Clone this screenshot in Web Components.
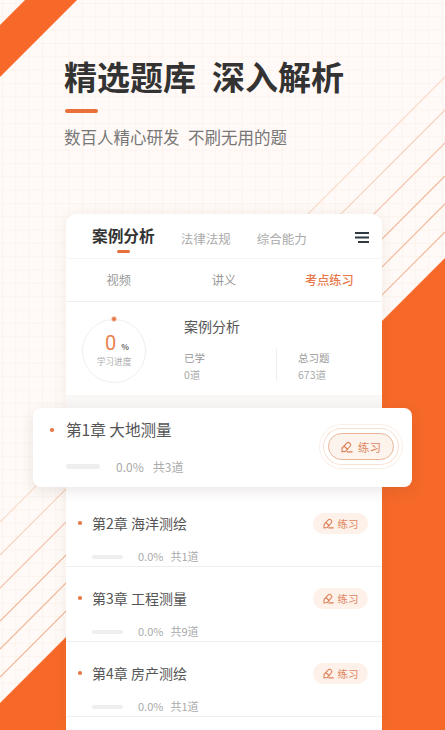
<!DOCTYPE html>
<html lang="zh-CN">
<head>
<meta charset="utf-8">
<title>精选题库</title>
<style>
html,body{margin:0;padding:0;background:#fffaf7}
body{font-family:"Noto Sans CJK SC","Noto Sans",sans-serif}
</style>
</head>
<body>
<template id="t-screen">
<style>
:host{display:block;position:relative;width:445px;height:730px;overflow:hidden;background-color:#fffaf7;
background-image:linear-gradient(#fdf3ee 1px,transparent 1px),linear-gradient(90deg,#fdf3ee 1px,transparent 1px);
background-size:13.33px 13.33px;background-position:2px 3px;font-family:"Noto Sans CJK SC","Noto Sans",sans-serif}
svg{position:absolute;left:0;top:0}
.content{position:relative;display:flex;flex-direction:column;height:100%}
::slotted([slot=float]){position:absolute;left:33px;top:408px}
</style>
<svg width="445" height="730" viewBox="0 0 445 730" aria-hidden="true">
  <polygon points="25,0 77,0 0,77 0,25" fill="#f66928"/>
  <polygon points="445,258 445,730 0,730 0,703" fill="#f66928"/>
  <g fill="none" stroke="#eeb596" stroke-width="1.1">
    <line x1="445" y1="77" x2="0" y2="522" stroke-opacity=".45"/>
    <line x1="445" y1="110" x2="0" y2="555" stroke-opacity=".6"/>
    <line x1="445" y1="143" x2="0" y2="588" stroke-opacity=".8"/>
    <line x1="445" y1="176" x2="0" y2="621"/>
    <line x1="445" y1="204" x2="0" y2="649"/>
    <line x1="445" y1="232" x2="0" y2="677"/>
  </g>
</svg>
<div class="content"><slot></slot></div>
<slot name="float"></slot>
</template>

<template id="t-hero">
<style>
:host{display:flex;flex-direction:column;align-items:flex-start;height:214px;box-sizing:border-box;padding:53px 0 0 64px}
.t{font-size:33px;line-height:46px;font-weight:700;color:#333;white-space:pre;word-spacing:.5px}
.bar{width:33px;height:4px;border-radius:2px;background:#e8703a;margin:10px 0 0 1px}
.s{font-size:16.5px;line-height:24px;color:#777;white-space:pre;margin-top:12px;word-spacing:.5px}
</style>
<div class="t"><slot name="title"></slot></div>
<div class="bar"></div>
<div class="s"><slot name="sub"></slot></div>
</template>

<template id="t-card">
<style>
:host{display:block;width:316px;margin-left:66px;flex:1;background:#fff;border-radius:10px 10px 0 0;box-shadow:0 0 14px rgba(120,90,70,.09)}
</style>
<slot></slot>
</template>

<template id="t-subjects">
<style>
:host{display:flex;align-items:flex-start;height:45px;box-sizing:border-box;padding-left:26px;border-bottom:1px solid #f6f4f2;position:relative}
.menu{margin-left:auto;margin-right:13px;margin-top:18px;width:14px;height:11px}
</style>
<slot></slot>
<svg class="menu" viewBox="0 0 14 11" aria-hidden="true"><path d="M0 1H14M0 5.5H14M3 10H14" stroke="#2f3a42" stroke-width="1.8" fill="none"/></svg>
</template>

<template id="t-subject">
<style>
:host{display:block;position:relative;font-size:12.5px;line-height:18px;color:#aaa;margin:16px 0 0 26px}
:host([active]){font-size:15.7px;line-height:22px;font-weight:700;color:#333;margin:11px 0 0 0}
.u{display:none}
:host([active]) .u{display:block;position:absolute;left:24.5px;top:25px;width:13.5px;height:3px;border-radius:2px;background:#e8703a}
</style>
<slot></slot><span class="u"></span>
</template>

<template id="t-sections">
<style>
:host{display:grid;grid-template-columns:repeat(3,1fr);height:43px;border-bottom:1px solid #efefef;box-sizing:border-box}
</style>
<slot></slot>
</template>

<template id="t-section">
<style>
:host{display:flex;align-items:center;justify-content:center;font-size:12.2px;color:#999}
:host([active]){color:#e8784a;font-weight:500}
</style>
<slot></slot>
</template>

<template id="t-summary">
<style>
:host{display:flex;box-sizing:border-box;padding:17px 0 0 16px;border-bottom:13px solid #f8f7f6;height:106px}
.body{margin-left:38px;width:170px}
.name{font-size:14px;line-height:20px;color:#555;margin-top:-3px}
.stats{display:grid;grid-template-columns:92px 1fr;margin-top:13px}
</style>
<slot name="ring"></slot>
<div class="body">
  <div class="name"><slot name="name"></slot></div>
  <div class="stats"><slot></slot></div>
</div>
</template>

<template id="t-ring">
<style>
:host{display:flex;flex-direction:column;align-items:center;position:relative;width:64px;height:64px;box-sizing:border-box;border:1px solid #eeeeee;border-radius:50%;flex:none}
.dot{position:absolute;left:29px;top:-3px;width:4px;height:4px;border-radius:50%;background:#e8784a;box-shadow:0 0 0 1px #f8d8c8}
.v{display:flex;align-items:baseline;margin-top:10px;line-height:26px;height:26px;margin-left:6px}
.n{font-size:20px;color:#e8824f;font-family:Roboto,sans-serif}
.p{font-size:8px;font-weight:700;color:#666;margin-left:5px}
.l{font-size:8.7px;line-height:12px;color:#aaa;margin-top:0}
</style>
<span class="dot"></span>
<div class="v"><span class="n"><slot name="value"></slot></span><span class="p">%</span></div>
<div class="l"><slot name="label"></slot></div>
</template>

<template id="t-stat">
<style>
:host{display:block;font-size:10.5px;line-height:17px;color:#aaa;position:relative;height:31px}
:host([split]){padding-left:22px}
:host([split])::before{content:"";position:absolute;left:0;top:0;width:1px;height:32px;background:#eee}
.k{color:#999}
</style>
<div class="k"><slot name="k"></slot></div>
<div><slot name="v"></slot></div>
</template>

<template id="t-row">
<style>
:host{display:grid;grid-template-columns:1fr auto;grid-template-rows:22px 16px;row-gap:14px;height:75px;box-sizing:border-box;padding:20px 14px 0 12px;border-bottom:1px solid #eeeeee;background:#fff}
.head{display:flex;align-items:center;grid-column:1;grid-row:1}
.dot{width:3.5px;height:3.5px;border-radius:50%;background:#e8784a;margin-right:10.5px;flex:none}
.title{font-size:14px;color:#555;white-space:pre}
.stats{grid-column:1;grid-row:2;display:flex;align-items:center;margin-left:14px;font-size:11px;color:#aaa;white-space:pre}
.bar{width:31px;height:4.5px;border-radius:3px;background:#eeeeee;margin:2px 15px 0 0}
.pct{margin-right:7px}
.action{grid-column:2;grid-row:1;display:flex;align-items:center}
:host([featured]){width:379px;height:79px;grid-template-rows:22px 16px;row-gap:17px;padding:11px 18px 0 17px;border-bottom:0;border-radius:8px;box-shadow:0 4px 14px rgba(90,70,60,.13)}
:host([featured]) .dot{margin-right:12.5px}
:host([featured]) .title{font-size:15.6px;margin-top:-2px}
:host([featured]) .stats{margin-left:16px;font-size:12px}
:host([featured]) .bar{width:34px;height:5px;margin:0 16px 0 0}
:host([featured]) .pct{margin-right:9px}
:host([featured]) .action{grid-row:1 / span 2}
</style>
<div class="head"><span class="dot"></span><span class="title"><slot name="title"></slot></span></div>
<div class="stats"><span class="bar"></span><span class="pct"><slot name="pct"></slot></span><span><slot name="count"></slot></span></div>
<div class="action"><slot name="action"></slot></div>
</template>

<template id="t-btn">
<style>
:host{display:inline-flex;align-items:center;justify-content:center;gap:4px;width:55px;height:21px;border-radius:11px;background:#fdf1ea;color:#e08660;font-size:10.5px;box-sizing:border-box}
:host([large]){width:66px;height:27px;border-radius:14px;font-size:11.5px;background:#fdf3ed;border:1px solid #eab598;gap:5px;
box-shadow:0 0 0 4px #fff,0 0 0 5px #f9e0d2,0 0 0 8px #fff,0 0 0 9px #fcefe8}
svg{width:11px;height:11px;flex:none}
:host([large]) svg{width:12px;height:12px}
</style>
<svg viewBox="0 0 12 12" fill="none" stroke="#dd7f55" stroke-width="1.15" stroke-linejoin="round" stroke-linecap="round" aria-hidden="true">
<path d="M1 10.8 L1.2 7 L6 1.8 Q7 1 8 1.6 L9.4 3 Q10 4 9.2 5 L4.6 10.4 Z"/>
<path d="M3.2 5.2 L6.6 8.2"/>
<path d="M6.4 10.8 H11.2"/>
</svg>
<slot></slot>
</template>

<app-screen>
  <promo-hero>
    <span slot="title">精选题库  深入解析</span>
    <span slot="sub">数百人精心研发  不刷无用的题</span>
  </promo-hero>
  <course-card>
    <subject-tabs>
      <subject-tab active>案例分析</subject-tab>
      <subject-tab>法律法规</subject-tab>
      <subject-tab>综合能力</subject-tab>
    </subject-tabs>
    <section-tabs>
      <section-tab>视频</section-tab>
      <section-tab>讲义</section-tab>
      <section-tab active>考点练习</section-tab>
    </section-tabs>
    <progress-summary>
      <progress-ring slot="ring"><span slot="value">0</span><span slot="label">学习进度</span></progress-ring>
      <span slot="name">案例分析</span>
      <summary-stat><span slot="k">已学</span><span slot="v">0道</span></summary-stat>
      <summary-stat split><span slot="k">总习题</span><span slot="v">673道</span></summary-stat>
    </progress-summary>
    <div style="height:84px"></div>
    <chapter-row>
      <span slot="title">第2章 海洋测绘</span><span slot="pct">0.0%</span><span slot="count">共1道</span>
      <practice-button slot="action">练习</practice-button>
    </chapter-row>
    <chapter-row>
      <span slot="title">第3章 工程测量</span><span slot="pct">0.0%</span><span slot="count">共9道</span>
      <practice-button slot="action">练习</practice-button>
    </chapter-row>
    <chapter-row>
      <span slot="title">第4章 房产测绘</span><span slot="pct">0.0%</span><span slot="count">共1道</span>
      <practice-button slot="action">练习</practice-button>
    </chapter-row>
  </course-card>
  <chapter-row slot="float" featured>
    <span slot="title">第1章 大地测量</span><span slot="pct">0.0%</span><span slot="count">共3道</span>
    <practice-button slot="action" large>练习</practice-button>
  </chapter-row>
</app-screen>

<script>
const defs={
 'app-screen':'t-screen','promo-hero':'t-hero','course-card':'t-card','subject-tabs':'t-subjects','subject-tab':'t-subject',
 'section-tabs':'t-sections','section-tab':'t-section','progress-summary':'t-summary','progress-ring':'t-ring',
 'summary-stat':'t-stat','chapter-row':'t-row','practice-button':'t-btn'
};
for(const [name,id] of Object.entries(defs)){
  customElements.define(name,class extends HTMLElement{
    constructor(){super();this.attachShadow({mode:'open'}).appendChild(document.getElementById(id).content.cloneNode(true));}
  });
}
</script>
</body>
</html>
